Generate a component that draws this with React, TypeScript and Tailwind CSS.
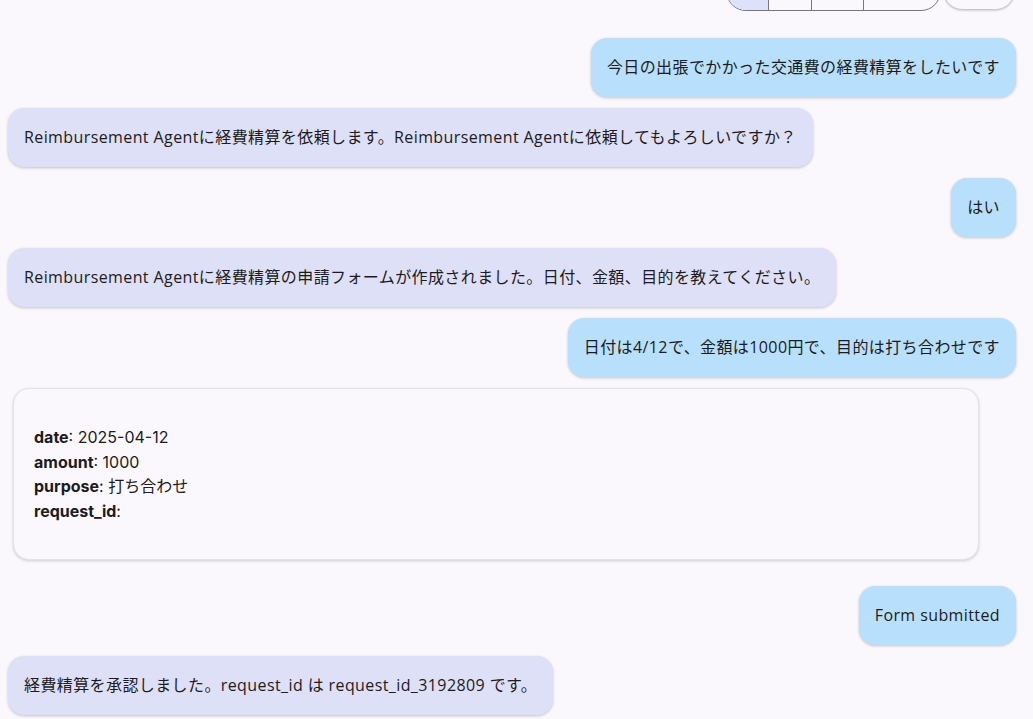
import React from 'react';

type Msg =
  | { kind: 'user'; text: string }
  | { kind: 'bot'; text: string }
  | { kind: 'form'; fields: [string, string][] };

const messages: Msg[] = [
  { kind: 'user', text: '今日の出張でかかった交通費の経費精算をしたいです' },
  {
    kind: 'bot',
    text: 'Reimbursement Agentに経費精算を依頼します。Reimbursement Agentに依頼してもよろしいですか？',
  },
  { kind: 'user', text: 'はい' },
  {
    kind: 'bot',
    text: 'Reimbursement Agentに経費精算の申請フォームが作成されました。日付、金額、目的を教えてください。',
  },
  { kind: 'user', text: '日付は4/12で、金額は1000円で、目的は打ち合わせです' },
  {
    kind: 'form',
    fields: [
      ['date', '2025-04-12'],
      ['amount', '1000'],
      ['purpose', '打ち合わせ'],
      ['request_id', ''],
    ],
  },
  { kind: 'user', text: 'Form submitted' },
  { kind: 'bot', text: '経費精算を承認しました。request_id は request_id_3192809 です。' },
];

const font = { fontFamily: '"Open Sans", "Noto Sans CJK JP", sans-serif' };

function Bubble({ m }: { m: Msg }) {
  if (m.kind === 'form') {
    return (
      <div className="mb-[15px] ml-[5px] mr-[37px] rounded-2xl border border-[#e4e2e8] bg-[#faf8fd] px-5 py-[36px] shadow-[0_1px_3px_rgba(0,0,0,0.18)]">
        <div className="text-[16px] leading-[24.5px] text-[#1d1b20]" style={{ fontFamily: 'Inter, "Noto Sans CJK JP", sans-serif' }}>
          {m.fields.map(([k, v]) => (
            <div key={k}>
              <span className="font-bold">{k}</span>: {v}
            </div>
          ))}
        </div>
      </div>
    );
  }
  const user = m.kind === 'user';
  return (
    <div className={user ? 'flex justify-end' : 'flex justify-start'}>
      <div
        className={
          'rounded-2xl px-4 py-[17px] text-[16px] leading-[25px] tracking-[0.4px] text-[#1d1b20] shadow-[0_1px_3px_rgba(0,0,0,0.22)] ' +
          (user ? 'bg-[#b8e0fd]' : 'bg-[#dee0f7]')
        }
      >
        {m.text}
      </div>
    </div>
  );
}

export default function App() {
  return (
    <div className="h-[719px] overflow-hidden bg-[#faf8fd]" style={font}>
      <div className="flex justify-end gap-[2px] pr-[18px] mt-[-29px]">
        <div className="flex h-[40px] overflow-hidden rounded-[20px] border border-[#79747e]">
          <div className="w-[42px] bg-[#dde1f9] border-r border-[#79747e]" />
          <div className="w-[43px] border-r border-[#79747e]" />
          <div className="w-[52px] border-r border-[#79747e]" />
          <div className="w-[76px]" />
        </div>
        <div className="h-[39px] w-[72px] rounded-[20px] border border-[#cac4d0] bg-[#faf8fd] shadow-[0_1px_2px_rgba(0,0,0,0.15)]" />
      </div>
      <div className="flex flex-col gap-[11px] pl-2 pr-[17px] pt-[27px]">
        {messages.map((m, i) => (
          <Bubble key={i} m={m} />
        ))}
      </div>
    </div>
  );
}
